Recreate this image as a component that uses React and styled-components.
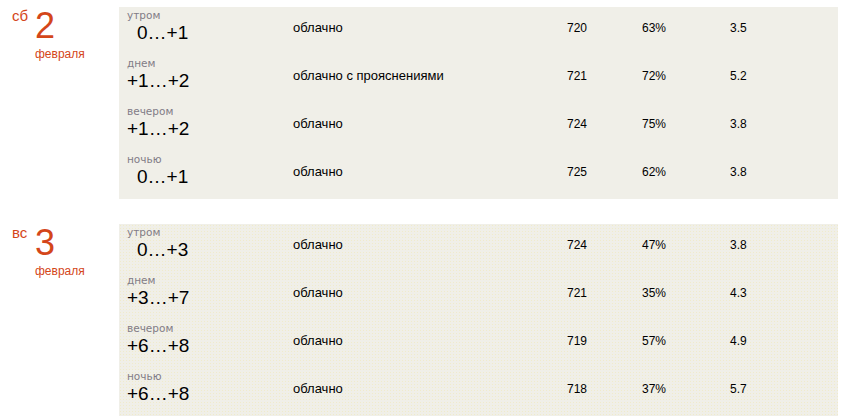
import React from 'react';
import styled, { createGlobalStyle } from 'styled-components';

const GlobalStyle = createGlobalStyle`
  body {
    margin: 0;
    background: #ffffff;
    font-family: "Liberation Sans", Arial, sans-serif;
  }
`;

const Page = styled.div`
  width: 844px;
  padding-top: 7px;
  display: flex;
  flex-direction: column;
  gap: 25px;
`;

const Day = styled.section`
  display: flex;
  align-items: flex-start;
`;

const DateCol = styled.div`
  width: 107px;
  padding-left: 12px;
  display: flex;
  align-items: flex-start;
  color: #d4461a;
`;

const Weekday = styled.div`
  font-size: 15px;
  line-height: 17px;
  width: 23px;
`;

const DateBlock = styled.div`
  display: flex;
  flex-direction: column;
`;

const DayNumber = styled.div`
  font-size: 36px;
  line-height: 36px;
  margin-top: 1px;
`;

const Month = styled.div`
  font-size: 12px;
  line-height: 14px;
  margin-top: 3px;
`;

const Panel = styled.div`
  width: 719px;
  background-color: #f0efe8;
  background-image: ${p => p.$dotted
    ? 'radial-gradient(rgba(240, 232, 170, 0.45) 0.6px, transparent 0.8px)'
    : 'none'};
  background-size: 3px 3px;
`;

const Row = styled.div`
  height: 48px;
  display: grid;
  grid-template-columns: 174px 274px 75px 88px 1fr;
  align-items: start;
`;

const TempCell = styled.div`
  padding: 2px 0 0 8px;
  display: flex;
  flex-direction: column;
`;

const Period = styled.div`
  font-family: "DejaVu Sans", Verdana, sans-serif;
  font-size: 10.5px;
  line-height: 13px;
  color: #827c86;
`;

const Temp = styled.div`
  font-size: 19px;
  line-height: 20px;
  margin-top: 1px;
  padding-left: ${p => (p.$unsigned ? '10px' : '0')};
  color: #000000;
`;

const Cell = styled.div`
  font-size: ${p => (p.$text ? '13px' : '12px')};
  line-height: 14px;
  padding-top: 14px;
  color: #000000;
`;

const days = [
  {
    weekday: 'сб',
    number: 2,
    month: 'февраля',
    rows: [
      ['утром', '0…+1', 'облачно', '720', '63%', '3.5'],
      ['днем', '+1…+2', 'облачно с прояснениями', '721', '72%', '5.2'],
      ['вечером', '+1…+2', 'облачно', '724', '75%', '3.8'],
      ['ночью', '0…+1', 'облачно', '725', '62%', '3.8'],
    ],
  },
  {
    weekday: 'вс',
    number: 3,
    month: 'февраля',
    dotted: true,
    rows: [
      ['утром', '0…+3', 'облачно', '724', '47%', '3.8'],
      ['днем', '+3…+7', 'облачно', '721', '35%', '4.3'],
      ['вечером', '+6…+8', 'облачно', '719', '57%', '4.9'],
      ['ночью', '+6…+8', 'облачно', '718', '37%', '5.7'],
    ],
  },
];

export default function App() {
  return (
    <>
      <GlobalStyle />
      <Page>
        {days.map(day => (
          <Day key={day.number}>
            <DateCol>
              <Weekday>{day.weekday}</Weekday>
              <DateBlock>
                <DayNumber>{day.number}</DayNumber>
                <Month>{day.month}</Month>
              </DateBlock>
            </DateCol>
            <Panel $dotted={day.dotted}>
              {day.rows.map(([period, temp, desc, pressure, humidity, wind]) => (
                <Row key={period}>
                  <TempCell>
                    <Period>{period}</Period>
                    <Temp $unsigned={!temp.startsWith('+')}>{temp}</Temp>
                  </TempCell>
                  <Cell $text>{desc}</Cell>
                  <Cell>{pressure}</Cell>
                  <Cell>{humidity}</Cell>
                  <Cell>{wind}</Cell>
                </Row>
              ))}
            </Panel>
          </Day>
        ))}
      </Page>
    </>
  );
}
